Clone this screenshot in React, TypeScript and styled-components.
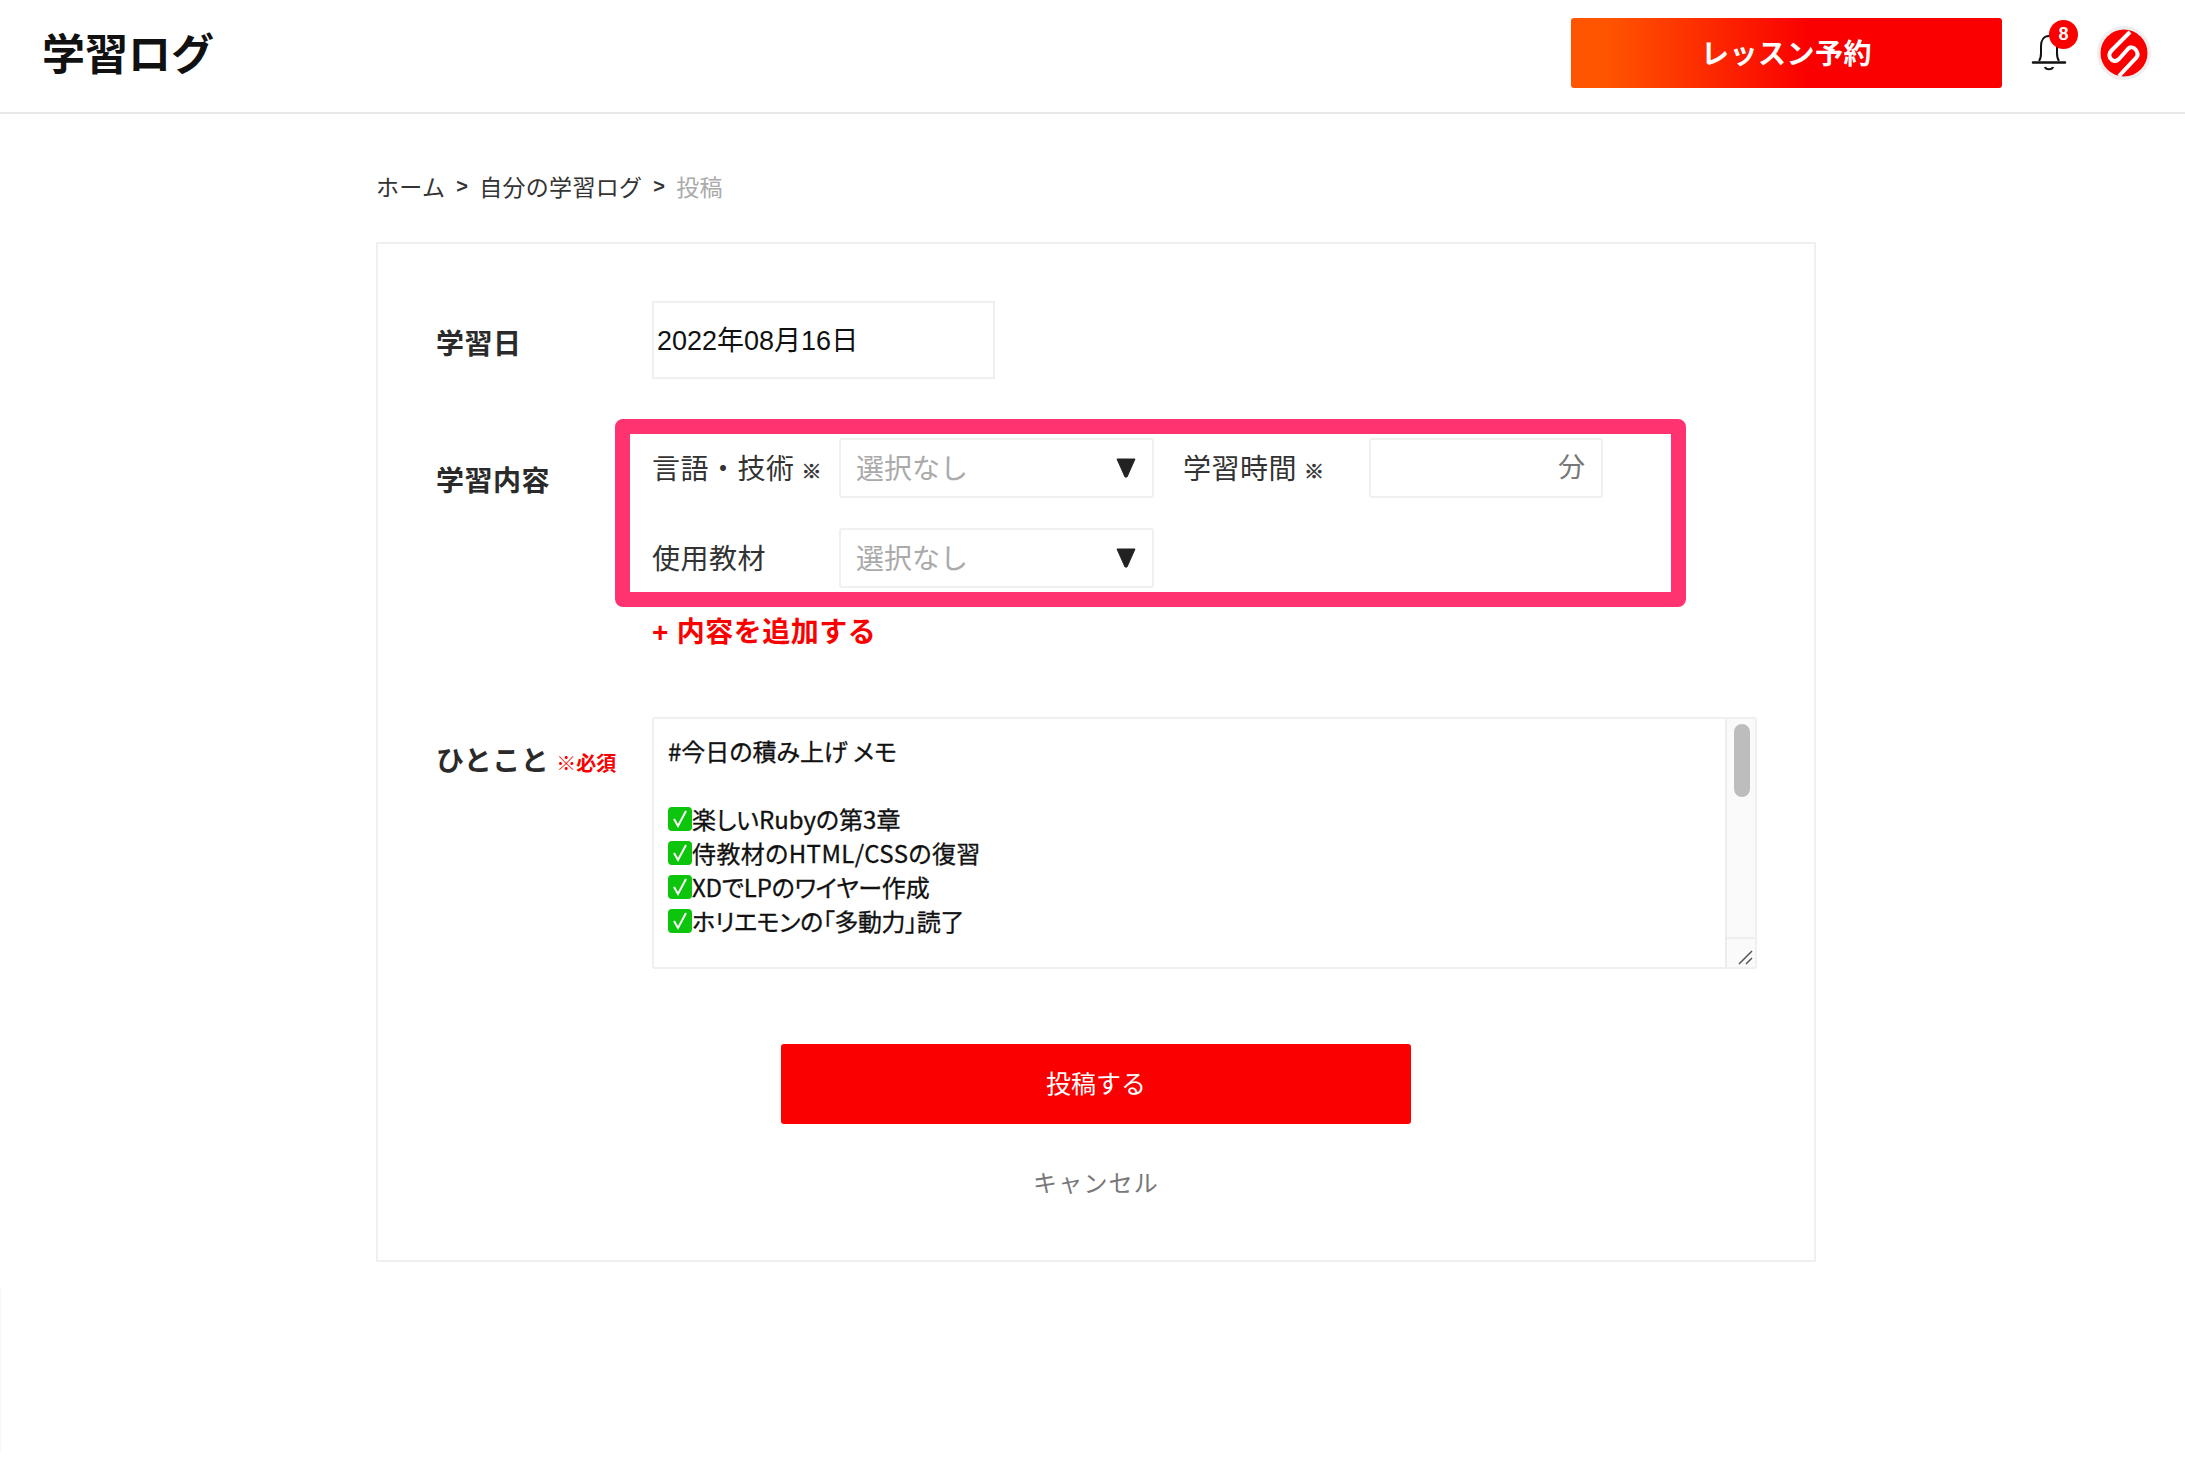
import styled, { createGlobalStyle } from "styled-components";

const GlobalStyle = createGlobalStyle`
  html, body {
    margin: 0;
    padding: 0;
    background: #fff;
  }
  body {
    font-family: "Liberation Sans", "Noto Sans CJK JP", sans-serif;
    color: #222;
  }
`;

const Page = styled.div`
  position: relative;
  width: 2185px;
  height: 1484px;
  overflow: hidden;
  background: #fff;
`;

const EdgeMark = styled.div`
  position: absolute;
  top: 1288px;
  left: 0;
  width: 1px;
  height: 164px;
  background: #f7f7f7;
`;

const Header = styled.header`
  box-sizing: border-box;
  height: 114px;
  display: flex;
  align-items: center;
  padding: 0 34px 6px 42px;
  border-bottom: 2px solid #e8e8e8;
`;

const Title = styled.h1`
  flex: 1;
  margin: 0;
  padding-bottom: 4px;
  font-size: 43px;
  font-weight: 700;
  color: #111;
`;

const ReserveButton = styled.button`
  width: 431px;
  height: 70px;
  padding: 0 0 2px;
  border: 0;
  border-radius: 3px;
  font: inherit;
  font-size: 28px;
  font-weight: 700;
  letter-spacing: 0.5px;
  color: #fff;
  background: linear-gradient(90deg, #ff5500 8%, #fa0000 55%);
`;

const Bell = styled.div`
  position: relative;
  width: 36px;
  height: 40px;
  margin-left: 29px;
  color: #111;
`;

const Badge = styled.span`
  position: absolute;
  top: -13px;
  left: 18px;
  width: 29px;
  height: 29px;
  border-radius: 50%;
  background: #fa0000;
  color: #fff;
  font-size: 18px;
  font-weight: 700;
  line-height: 29px;
  text-align: center;
`;

const Avatar = styled.svg`
  display: block;
  width: 54px;
  height: 54px;
  margin-left: 30px;
`;

const Main = styled.main`
  box-sizing: border-box;
  width: 1440px;
  margin-left: 376px;
`;

const Breadcrumb = styled.nav`
  display: flex;
  align-items: center;
  height: 32px;
  margin-top: 56px;
  font-size: 23px;
  letter-spacing: 0.3px;
  color: #333;
`;

const Separator = styled.span`
  margin: 0 11px;
  font-weight: 700;
  font-size: 20px;
`;

const Current = styled.span`
  color: #aaa;
`;

const Card = styled.section`
  box-sizing: border-box;
  height: 1020px;
  margin-top: 40px;
  padding: 57px 0 0 58px;
  border: 2px solid #f0f0f0;
`;

const Row = styled.div<{ $mt?: number }>`
  display: flex;
  margin-top: ${(p) => p.$mt ?? 0}px;
`;

const RowLabel = styled.div<{ $pt: number }>`
  width: 216px;
  padding-top: ${(p) => p.$pt}px;
  font-size: 28px;
  font-weight: 700;
  line-height: 40px;
  letter-spacing: 0.5px;
  color: #2a2a2a;
  white-space: nowrap;
`;

const Required = styled.span`
  margin-left: 7px;
  font-size: 20px;
  font-weight: 700;
  letter-spacing: 0;
  color: #fa0000;
`;

const DateField = styled.div`
  box-sizing: border-box;
  width: 343px;
  height: 78px;
  padding-left: 3px;
  border: 2px solid #f0f0f0;
  font-size: 27px;
  line-height: 77px;
  color: #111;
`;

const ContentColumn = styled.div`
  margin-left: -37px;
`;

const Highlight = styled.div`
  box-sizing: border-box;
  width: 1071px;
  height: 188px;
  padding: 4px 0 0 22px;
  border: 15px solid #ff3370;
  border-radius: 8px;
`;

const FieldRow = styled.div<{ $mt?: number }>`
  display: flex;
  align-items: center;
  height: 60px;
  margin-top: ${(p) => p.$mt ?? 0}px;
`;

const FieldLabel = styled.span<{ $w: number; $ml?: number }>`
  width: ${(p) => p.$w}px;
  margin-left: ${(p) => p.$ml ?? 0}px;
  padding-bottom: 2px;
  font-size: 28px;
  letter-spacing: 0.5px;
  color: #333;
  white-space: nowrap;
`;

const Mark = styled.span`
  margin-left: 7px;
  font-size: 20px;
  font-weight: 700;
  letter-spacing: 0;
  -webkit-text-stroke: 0.6px #333;
`;

const SelectBox = styled.div`
  box-sizing: border-box;
  display: flex;
  align-items: center;
  justify-content: space-between;
  width: 315px;
  height: 60px;
  padding: 0 16px 0 15px;
  border: 2px solid #f0f0f0;
  border-radius: 3px;
  font-size: 28px;
  color: #aaa;
`;

const Placeholder = styled.span`
  padding-bottom: 2px;
`;

const Caret = styled.svg`
  display: block;
  width: 20px;
  height: 20px;
`;

const MinutesBox = styled.div`
  box-sizing: border-box;
  width: 234px;
  height: 60px;
  margin-left: -1px;
  padding-right: 16px;
  border: 2px solid #f0f0f0;
  border-radius: 3px;
  font-size: 27px;
  line-height: 56px;
  text-align: right;
  color: #777;
`;

const AddLink = styled.div`
  margin: 6px 0 0 37px;
  font-size: 28px;
  font-weight: 700;
  line-height: 40px;
  letter-spacing: 0.5px;
  color: #fa0000;
`;

const Plus = styled.span`
  margin-right: 8px;
`;

const MemoBox = styled.div`
  box-sizing: border-box;
  position: relative;
  width: 1105px;
  height: 252px;
  padding: 15px 0 0 14px;
  border: 2px solid #f0f0f0;
  border-radius: 3px;
  overflow: hidden;
  font-family: "Noto Sans CJK JP", sans-serif;
  font-feature-settings: "palt";
  font-size: 24px;
  line-height: 34px;
  color: #111;
`;

const MemoLine = styled.div<{ $ls?: number }>`
  display: flex;
  align-items: center;
  height: 34px;
  white-space: pre;
  letter-spacing: ${(p) => p.$ls ?? 0}px;
  -webkit-text-stroke: 0.3px #111;
`;

const CheckIcon = styled.svg`
  display: block;
  flex: none;
  width: 24px;
  height: 26px;
`;

const ScrollTrack = styled.div`
  position: absolute;
  top: 0;
  right: 0;
  bottom: 0;
  width: 30px;
  box-sizing: border-box;
  border-left: 2px solid #eeeeee;
  background: #fafafa;
`;

const ScrollThumb = styled.div`
  width: 16px;
  height: 73px;
  margin: 5px 0 0 7px;
  border-radius: 8px;
  background: #bdbdbd;
`;

const Resizer = styled.svg`
  position: absolute;
  right: 0;
  bottom: 0;
  display: block;
  width: 30px;
  height: 30px;
`;

const Actions = styled.div`
  display: flex;
  flex-direction: column;
  align-items: center;
  width: 1436px;
  margin: 75px 0 0 -58px;
`;

const SubmitButton = styled.button`
  width: 630px;
  height: 80px;
  padding: 0 0 5px;
  border: 0;
  border-radius: 3px;
  background: #fa0000;
  font: inherit;
  font-size: 25px;
  color: #fff;
`;

const CancelLink = styled.div`
  margin-top: 42px;
  font-size: 24px;
  line-height: 36px;
  letter-spacing: 1.2px;
  color: #777;
`;

const Check = () => (
  <CheckIcon viewBox="0 0 24 26">
    <rect x="0" y="1" width="24" height="24" rx="4" fill="#0cc50c" />
    <path d="M6 13l4 7 8-15" fill="none" stroke="#fff" strokeWidth="2" />
  </CheckIcon>
);

const DownCaret = () => (
  <Caret viewBox="0 0 20 20">
    <path d="M1 1h18l-8 18h-2z" fill="#222" stroke="#222" strokeLinejoin="round" />
  </Caret>
);

export default function App() {
  return (
    <Page>
      <GlobalStyle />
      <EdgeMark />
      <Header>
        <Title>学習ログ</Title>
        <ReserveButton>レッスン予約</ReserveButton>
        <Bell>
          <svg width="36" height="40" viewBox="0 0 36 40" fill="none" stroke="currentColor" strokeWidth="2">
            <path d="M8 28c1.500-2 2-4 2-8v-7c0-6 3-10 8-10s8 4 8 10v7c0 4 .5 6 2 8" />
            <path d="M2 29.500h32" strokeWidth="2.500" strokeLinecap="round" />
            <path d="M14 34c1 3 7 3 8 0" strokeWidth="2.200" />
          </svg>
          <Badge>8</Badge>
        </Bell>
        <Avatar viewBox="0 0 54 54">
          <circle cx="27" cy="27" r="27" fill="#eeeeee" />
          <circle cx="27" cy="27" r="23.500" fill="#fa0000" />
          <path
            d="M33 6L15 24c-4 4-3 8 0 10s5 1 7-1l8-9c3-4 7-3 9 0s2 6 0 8L22 50"
            fill="none"
            stroke="#fff"
            strokeWidth="4"
          />
        </Avatar>
      </Header>
      <Main>
        <Breadcrumb>
          <span>ホーム</span>
          <Separator>&gt;</Separator>
          <span>自分の学習ログ</span>
          <Separator>&gt;</Separator>
          <Current>投稿</Current>
        </Breadcrumb>
        <Card>
          <Row>
            <RowLabel $pt={24}>学習日</RowLabel>
            <DateField>2022年08月16日</DateField>
          </Row>
          <Row $mt={40}>
            <RowLabel $pt={43}>学習内容</RowLabel>
            <ContentColumn>
              <Highlight>
                <FieldRow>
                  <FieldLabel $w={187}>
                    言語・技術<Mark>※</Mark>
                  </FieldLabel>
                  <SelectBox>
                    <Placeholder>選択なし</Placeholder>
                    <DownCaret />
                  </SelectBox>
                  <FieldLabel $w={187} $ml={29}>
                    学習時間<Mark>※</Mark>
                  </FieldLabel>
                  <MinutesBox>分</MinutesBox>
                </FieldRow>
                <FieldRow $mt={30}>
                  <FieldLabel $w={187}>使用教材</FieldLabel>
                  <SelectBox>
                    <Placeholder>選択なし</Placeholder>
                    <DownCaret />
                  </SelectBox>
                </FieldRow>
              </Highlight>
              <AddLink>
                <Plus>+</Plus>内容を追加する
              </AddLink>
            </ContentColumn>
          </Row>
          <Row $mt={64}>
            <RowLabel $pt={25}>
              ひとこと
              <Required>※必須</Required>
            </RowLabel>
            <MemoBox>
              <MemoLine>#今日の積み上げ メモ</MemoLine>
              <MemoLine> </MemoLine>
              <MemoLine>
                <Check />
                楽しいRubyの第3章
              </MemoLine>
              <MemoLine $ls={0.4}>
                <Check />
                侍教材のHTML/CSSの復習
              </MemoLine>
              <MemoLine $ls={-0.2}>
                <Check />
                XDでLPのワイヤー作成
              </MemoLine>
              <MemoLine $ls={-0.4}>
                <Check />
                ホリエモンの「多動力」読了
              </MemoLine>
              <ScrollTrack>
                <ScrollThumb />
              </ScrollTrack>
              <Resizer viewBox="0 0 30 30">
                <path d="M1 30V1h29" fill="#fafafa" stroke="#e4e4e4" strokeWidth="1" />
                <path d="M14 27L27 14M21 27l6-6" stroke="#555" strokeWidth="1.500" />
              </Resizer>
            </MemoBox>
          </Row>
          <Actions>
            <SubmitButton>投稿する</SubmitButton>
            <CancelLink>キャンセル</CancelLink>
          </Actions>
        </Card>
      </Main>
    </Page>
  );
}
